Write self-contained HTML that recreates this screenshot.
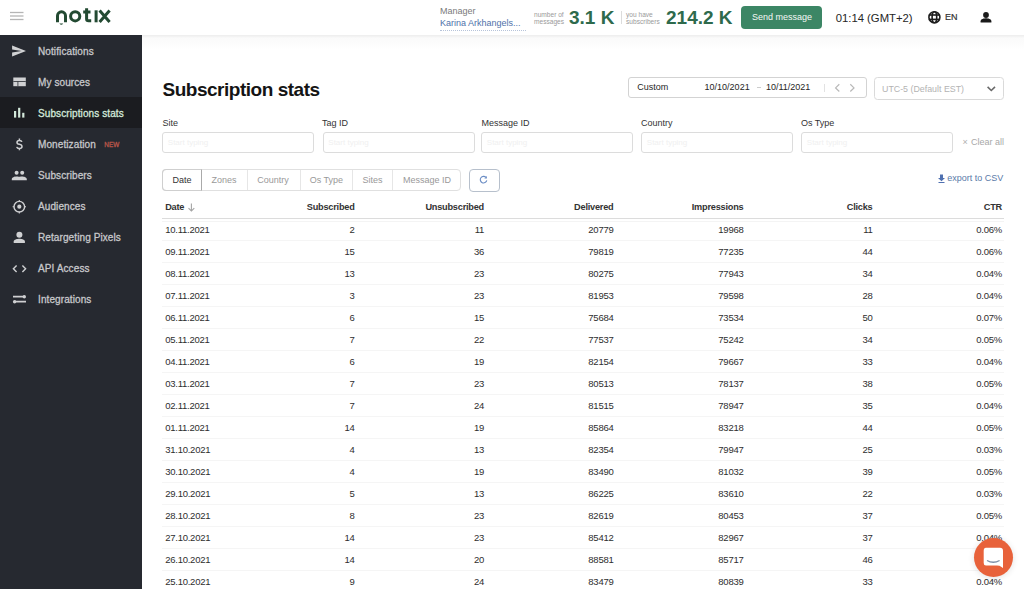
<!DOCTYPE html>
<html><head><meta charset="utf-8">
<style>
*{box-sizing:border-box;margin:0;padding:0}
html,body{width:1024px;height:589px;overflow:hidden;background:#fff;font-family:"Liberation Sans",sans-serif;color:#222}
.a{position:absolute;line-height:1;white-space:nowrap}
#hdr{position:absolute;left:0;top:0;width:1024px;height:35px;background:#fff}
#shd{position:absolute;left:142px;top:35px;width:882px;height:14px;background:linear-gradient(#ededed 0px,#f3f3f3 1.5px,#fafafa 3px,#fcfcfc 8px,#fff 14px)}
#side{position:absolute;left:0;top:35px;width:142px;height:554px;background:#262930}
.nav{position:absolute;left:0;width:142px;height:31px;color:#c6c7ca}
.nav .t{position:absolute;left:38px;top:12.2px;font-size:10px;line-height:1;white-space:nowrap;letter-spacing:0.1px;-webkit-text-stroke:0.3px currentColor}
.nav svg{position:absolute;left:0;top:0}
.nav.act{background:#1b1c20;color:#d3e8da}
.new{position:absolute;left:66.2px;top:1.6px;color:#b9564a;font-size:6.4px;letter-spacing:0.1px;-webkit-text-stroke:0.3px currentColor}
.lbl{position:absolute;top:119px;font-size:9px;line-height:1;color:#333}
.inp{position:absolute;top:132px;height:21px;width:152px;border:1px solid #dcdcdc;border-radius:3px}
.inp span{position:absolute;left:4.8px;top:6px;font-size:8px;line-height:1;color:#f0f0f0}
.tab{position:absolute;top:175.8px;font-size:9px;line-height:1;color:#999}
.vd{position:absolute;top:170px;width:1px;height:20px;background:#e6e6e6}
.th{position:absolute;top:202.7px;left:0;width:1024px;height:10px;font-size:9.2px;letter-spacing:-0.22px;font-weight:bold;color:#333}
.th i,.tr i{position:absolute;top:0;font-style:normal;line-height:1;white-space:nowrap}
.tr{position:absolute;left:0;width:1024px;height:22px;font-size:9.5px;letter-spacing:-0.25px;color:#2e2e2e}
.tr i{top:6.1px}
.sep{position:absolute;left:162px;width:842px;height:1px;background:#f5f5f5}
.c0{left:165.2px}
.c1{right:669.4px}.c2{right:540px}.c3{right:410.5px}.c4{right:280.5px}.c5{right:151.5px}.c6{right:22px}
</style></head><body>
<div id="hdr">
  <svg class="a" style="left:0;top:0" width="140" height="35" viewBox="0 0 140 35">
    <g stroke="#b5b5b5" stroke-width="1.3"><line x1="10" y1="12.5" x2="23.5" y2="12.5"/><line x1="10" y1="16" x2="23.5" y2="16"/><line x1="10" y1="19.5" x2="23.5" y2="19.5"/></g>
    <g stroke="#234a32" stroke-width="3" fill="none" stroke-linecap="butt">
      <path d="M57.5 22.3 V15.8 A4 4 0 0 1 65.5 15.8 V22.3"/>
      <circle cx="75.2" cy="16.3" r="4.6"/>
      <path d="M86.6 8.3 V19 Q86.6 20.8 88.6 20.8 H91.2"/>
      <line x1="83.2" y1="12" x2="90.5" y2="12"/>
      <line x1="96.1" y1="10.3" x2="96.1" y2="22.3"/>
      <path d="M99.6 10.6 L109.6 22 M109.6 10.6 L99.6 22"/>
    </g>
    <path d="M59.4 23.4 Q61.3 26.2 63.2 23.4 Z" fill="#234a32"/>
  </svg>
  <div class="a" style="left:440px;top:6.6px;font-size:9px;color:#7a7a7a">Manager</div>
  <div class="a" style="left:440px;top:19.1px;font-size:9px;color:#4f72aa">Karina Arkhangels...</div>
  <div class="a" style="left:440px;top:29.5px;width:86px;height:0;border-top:1px dotted #b7c4da"></div>
  <div class="a" style="left:534px;top:10.8px;font-size:6.6px;line-height:7.6px;color:#9a9a9a">number of<br>messages</div>
  <div class="a" style="left:569px;top:8.3px;font-size:19px;font-weight:bold;color:#2e6a4c">3.1 K</div>
  <div class="a" style="left:621px;top:11px;width:1px;height:13px;background:#dcdcdc"></div>
  <div class="a" style="left:626px;top:10.8px;font-size:6.6px;line-height:7.6px;color:#9a9a9a">you have<br>subscribers</div>
  <div class="a" style="left:666px;top:8.3px;font-size:19px;font-weight:bold;color:#2e6a4c">214.2 K</div>
  <div class="a" style="left:741px;top:6px;width:81px;height:22.5px;background:#3c8665;border-radius:4px"></div>
  <div class="a" style="left:752px;top:12.8px;font-size:9px;color:#f4f8f5">Send message</div>
  <div class="a" style="left:835.7px;top:12.7px;font-size:11.3px;color:#262626">01:14 (GMT+2)</div>
  <svg class="a" style="left:927px;top:10px" width="15" height="15" viewBox="0 0 15 15">
    <g fill="none" stroke="#1d1d1d" stroke-width="1.6"><circle cx="7.4" cy="7.2" r="5.5"/><ellipse cx="7.4" cy="7.2" rx="2.3" ry="5.5"/><line x1="1.8" y1="5" x2="13" y2="5"/><line x1="1.8" y1="9.4" x2="13" y2="9.4"/></g>
  </svg>
  <div class="a" style="left:945px;top:12.9px;font-size:9px;-webkit-text-stroke:0.2px #333;color:#333">EN</div>
  <svg class="a" style="left:978px;top:10px" width="16" height="15" viewBox="0 0 16 15">
    <circle cx="8" cy="5" r="2.9" fill="#1a1a1a"/><path d="M2.6 12.4 V11.2 C2.6 9 6 8.2 8 8.2 C10 8.2 13.4 9 13.4 11.2 V12.4 Z" fill="#1a1a1a"/>
  </svg>
</div>
<div id="shd"></div>
<div id="side">
  <div class="nav" style="top:0">
    <svg width="40" height="31"><path d="M12.1 21.6 L26 16 L12.1 10.4 L12.1 14.6 L21.5 16 L12.1 17.4 Z" fill="#d0d1d3"/></svg>
    <span class="t">Notifications</span></div>
  <div class="nav" style="top:31px">
    <svg width="40" height="31"><rect x="13.3" y="11.5" width="12.5" height="8.7" fill="#d0d1d3"/><path d="M13.3 15.5 H25.8 M17.9 15.5 V20.2" stroke="#262930" stroke-width="0.8"/></svg>
    <span class="t">My sources</span></div>
  <div class="nav act" style="top:62px">
    <svg width="40" height="31"><rect x="14" y="14" width="2.2" height="6.6" fill="#d3e8da"/><rect x="18.1" y="10.8" width="2.2" height="9.8" fill="#d3e8da"/><rect x="22.2" y="15.8" width="2.2" height="4.8" fill="#d3e8da"/></svg>
    <span class="t">Subscriptions stats</span></div>
  <div class="nav" style="top:93px">
    <svg width="40" height="31"><path d="M21.9 13.9 Q21.5 12.4 19.4 12.4 Q17 12.4 17 14.4 Q17 15.9 19.4 16.3 Q22 16.7 22 18.6 Q22 20.6 19.4 20.6 Q17.2 20.6 16.7 18.9 M19.4 10.6 V12.4 M19.4 20.6 V22.2" fill="none" stroke="#cfd0d2" stroke-width="1.5"/></svg>
    <span class="t">Monetization<span class="new">NEW</span></span></div>
  <div class="nav" style="top:124px">
    <svg width="40" height="31"><circle cx="16.6" cy="13.7" r="2" fill="#cfd0d2"/><circle cx="22.2" cy="13.7" r="2" fill="#cfd0d2"/><path d="M11.8 21.3 V20 C11.8 18.2 14.6 17.4 16.5 17.4 C18.4 17.4 19.3 17.7 19.3 17.7 C19.3 17.7 20.2 17.4 22.1 17.4 C24 17.4 26.8 18.2 26.8 20 V21.3 Z" fill="#cfd0d2"/></svg>
    <span class="t">Subscribers</span></div>
  <div class="nav" style="top:155px">
    <svg width="40" height="31"><circle cx="19.3" cy="16.7" r="5.3" fill="none" stroke="#cfd0d2" stroke-width="1.4"/><circle cx="19.3" cy="16.7" r="2.1" fill="#cfd0d2"/><path d="M19.3 10 V11.6 M19.3 21.8 V23.4 M12.6 16.7 H14.2 M24.4 16.7 H26" stroke="#cfd0d2" stroke-width="1.1"/></svg>
    <span class="t">Audiences</span></div>
  <div class="nav" style="top:186px">
    <svg width="40" height="31"><circle cx="19.4" cy="13.8" r="3" fill="#cfd0d2"/><path d="M13.7 22.1 V20.6 C13.7 18.6 17.3 17.8 19.4 17.8 C21.5 17.8 24.9 18.6 24.9 20.6 V22.1 Z" fill="#cfd0d2"/></svg>
    <span class="t">Retargeting Pixels</span></div>
  <div class="nav" style="top:217px">
    <svg width="40" height="31"><path d="M16.6 13.6 L13.4 16.8 L16.6 20 M22.4 13.6 L25.6 16.8 L22.4 20" fill="none" stroke="#cfd0d2" stroke-width="1.4"/></svg>
    <span class="t">API Access</span></div>
  <div class="nav" style="top:248px">
    <svg width="40" height="31"><path d="M13 13.7 H24.5 M14.5 18.7 H26" stroke="#cfd0d2" stroke-width="1.7"/><circle cx="24.3" cy="13.7" r="1.7" fill="#cfd0d2"/><circle cx="14.6" cy="18.7" r="1.7" fill="#cfd0d2"/></svg>
    <span class="t">Integrations</span></div>
</div>
<div class="a" style="left:162.5px;top:79.9px;font-size:19px;letter-spacing:-0.48px;font-weight:bold;color:#141414">Subscription stats</div>
<div class="a" style="left:628px;top:77px;width:238.5px;height:21px;border:1px solid #d3d3d3;border-radius:3px"></div>
<div class="a" style="left:637.3px;top:82.6px;font-size:9px;color:#262626">Custom</div>
<div class="a" style="left:704.6px;top:82.6px;font-size:9px;color:#262626">10/10/2021</div>
<div class="a" style="left:757px;top:87px;width:4px;height:1px;background:#ccc"></div>
<div class="a" style="left:766px;top:82.6px;font-size:9px;color:#262626">10/11/2021</div>
<div class="a" style="left:824px;top:84px;width:1px;height:7.5px;background:#e2e2e2"></div>
<svg class="a" style="left:830px;top:80px" width="30" height="15"><path d="M839.3 4.3 L835.6 7.9 L839.3 11.5" transform="translate(-830 0)" fill="none" stroke="#b8b8b8" stroke-width="1.2"/><path d="M850.3 4.3 L854 7.9 L850.3 11.5" transform="translate(-830 0)" fill="none" stroke="#b8b8b8" stroke-width="1.2"/></svg>
<div class="a" style="left:874px;top:77px;width:129.5px;height:22.5px;border:1px solid #dadada;border-radius:3.5px"></div>
<div class="a" style="left:882px;top:84.8px;font-size:8.85px;color:#b3b3b3">UTC-5 (Default EST)</div>
<svg class="a" style="left:984px;top:83px" width="14" height="12"><path d="M3.6 3.9 L7.3 7.5 L11 3.9" fill="none" stroke="#6a6a6a" stroke-width="1.6"/></svg>
<div class="lbl" style="left:162.4px">Site</div>
<div class="lbl" style="left:322px">Tag ID</div>
<div class="lbl" style="left:481.5px">Message ID</div>
<div class="lbl" style="left:641px">Country</div>
<div class="lbl" style="left:801px">Os Type</div>
<div class="inp" style="left:162px"><span>Start typing</span></div>
<div class="inp" style="left:322.5px"><span>Start typing</span></div>
<div class="inp" style="left:481px"><span>Start typing</span></div>
<div class="inp" style="left:641px"><span>Start typing</span></div>
<div class="inp" style="left:801px"><span>Start typing</span></div>
<div class="a" style="left:962.5px;top:138px;font-size:9px;color:#b0b0b0">&#215;</div>
<div class="a" style="left:971px;top:137.7px;font-size:9px;color:#a8a8a8">Clear all</div>
<div class="a" style="left:162px;top:169px;width:299px;height:22px;border:1px solid #e0e0e0;border-radius:4px"></div>
<div class="a" style="left:162px;top:169px;width:40px;height:22px;border:1px solid #cfcfcf;border-right-color:#aaa;border-radius:4px 0 0 4px"></div>
<div class="vd" style="left:247px"></div>
<div class="vd" style="left:299.5px"></div>
<div class="vd" style="left:352px"></div>
<div class="vd" style="left:392px"></div>
<div class="tab" style="left:172.6px;color:#333">Date</div>
<div class="tab" style="left:211.6px">Zones</div>
<div class="tab" style="left:257.3px">Country</div>
<div class="tab" style="left:309.7px">Os Type</div>
<div class="tab" style="left:362.5px">Sites</div>
<div class="tab" style="left:403px">Message ID</div>
<div class="a" style="left:468.5px;top:168.5px;width:31px;height:23px;border:1px solid #b7c0cc;border-radius:4px"></div>
<svg class="a" style="left:476px;top:172px" width="16" height="16"><path d="M10 5.4 A3.3 3.3 0 1 0 10.8 8.4" fill="none" stroke="#6a8cc4" stroke-width="1.1"/><path d="M10.9 3.9 V6.5 H8.3 Z" fill="#6a8cc4"/></svg>
<svg class="a" style="left:937px;top:173px" width="10" height="11"><path d="M3 1.5 H6 V5 H8 L4.5 8.3 L1 5 H3 Z" fill="#4f70b0"/><rect x="1.5" y="9" width="6" height="1" fill="#4f70b0"/></svg>
<div class="a" style="left:947.2px;top:174px;font-size:9px;color:#5a7aa8">export to CSV</div>
<div class="th"><i class="c0">Date</i><i class="c1">Subscribed</i><i class="c2">Unsubscribed</i><i class="c3">Delivered</i><i class="c4">Impressions</i><i class="c5">Clicks</i><i class="c6">CTR</i></div>
<svg class="a" style="left:186px;top:201px" width="10" height="12"><path d="M5.4 2.6 V10 M2.5 7.1 L5.4 10 L8.3 7.1" fill="none" stroke="#a5a5a5" stroke-width="1.1"/></svg>
<div class="a" style="left:162px;top:218px;width:842px;height:1px;background:#dcdcdc"></div>
<div class="a" style="left:162px;top:221px;width:842px;height:1px;background:#f4f4f4"></div>
<div class="sep" style="top:240px"></div>
<div class="sep" style="top:262px"></div>
<div class="sep" style="top:284px"></div>
<div class="sep" style="top:306px"></div>
<div class="sep" style="top:328px"></div>
<div class="sep" style="top:350px"></div>
<div class="sep" style="top:372px"></div>
<div class="sep" style="top:394px"></div>
<div class="sep" style="top:416px"></div>
<div class="sep" style="top:438px"></div>
<div class="sep" style="top:460px"></div>
<div class="sep" style="top:482px"></div>
<div class="sep" style="top:504px"></div>
<div class="sep" style="top:526px"></div>
<div class="sep" style="top:548px"></div>
<div class="sep" style="top:570px"></div>
<div class="tr" style="top:219px"><i class="c0">10.11.2021</i><i class="c1">2</i><i class="c2">11</i><i class="c3">20779</i><i class="c4">19968</i><i class="c5">11</i><i class="c6">0.06%</i></div>
<div class="tr" style="top:241px"><i class="c0">09.11.2021</i><i class="c1">15</i><i class="c2">36</i><i class="c3">79819</i><i class="c4">77235</i><i class="c5">44</i><i class="c6">0.06%</i></div>
<div class="tr" style="top:263px"><i class="c0">08.11.2021</i><i class="c1">13</i><i class="c2">23</i><i class="c3">80275</i><i class="c4">77943</i><i class="c5">34</i><i class="c6">0.04%</i></div>
<div class="tr" style="top:285px"><i class="c0">07.11.2021</i><i class="c1">3</i><i class="c2">23</i><i class="c3">81953</i><i class="c4">79598</i><i class="c5">28</i><i class="c6">0.04%</i></div>
<div class="tr" style="top:307px"><i class="c0">06.11.2021</i><i class="c1">6</i><i class="c2">15</i><i class="c3">75684</i><i class="c4">73534</i><i class="c5">50</i><i class="c6">0.07%</i></div>
<div class="tr" style="top:329px"><i class="c0">05.11.2021</i><i class="c1">7</i><i class="c2">22</i><i class="c3">77537</i><i class="c4">75242</i><i class="c5">34</i><i class="c6">0.05%</i></div>
<div class="tr" style="top:351px"><i class="c0">04.11.2021</i><i class="c1">6</i><i class="c2">19</i><i class="c3">82154</i><i class="c4">79667</i><i class="c5">33</i><i class="c6">0.04%</i></div>
<div class="tr" style="top:373px"><i class="c0">03.11.2021</i><i class="c1">7</i><i class="c2">23</i><i class="c3">80513</i><i class="c4">78137</i><i class="c5">38</i><i class="c6">0.05%</i></div>
<div class="tr" style="top:395px"><i class="c0">02.11.2021</i><i class="c1">7</i><i class="c2">24</i><i class="c3">81515</i><i class="c4">78947</i><i class="c5">35</i><i class="c6">0.04%</i></div>
<div class="tr" style="top:417px"><i class="c0">01.11.2021</i><i class="c1">14</i><i class="c2">19</i><i class="c3">85864</i><i class="c4">83218</i><i class="c5">44</i><i class="c6">0.05%</i></div>
<div class="tr" style="top:439px"><i class="c0">31.10.2021</i><i class="c1">4</i><i class="c2">13</i><i class="c3">82354</i><i class="c4">79947</i><i class="c5">25</i><i class="c6">0.03%</i></div>
<div class="tr" style="top:461px"><i class="c0">30.10.2021</i><i class="c1">4</i><i class="c2">19</i><i class="c3">83490</i><i class="c4">81032</i><i class="c5">39</i><i class="c6">0.05%</i></div>
<div class="tr" style="top:483px"><i class="c0">29.10.2021</i><i class="c1">5</i><i class="c2">13</i><i class="c3">86225</i><i class="c4">83610</i><i class="c5">22</i><i class="c6">0.03%</i></div>
<div class="tr" style="top:505px"><i class="c0">28.10.2021</i><i class="c1">8</i><i class="c2">23</i><i class="c3">82619</i><i class="c4">80453</i><i class="c5">37</i><i class="c6">0.05%</i></div>
<div class="tr" style="top:527px"><i class="c0">27.10.2021</i><i class="c1">14</i><i class="c2">23</i><i class="c3">85412</i><i class="c4">82967</i><i class="c5">37</i><i class="c6">0.04%</i></div>
<div class="tr" style="top:549px"><i class="c0">26.10.2021</i><i class="c1">14</i><i class="c2">20</i><i class="c3">88581</i><i class="c4">85717</i><i class="c5">46</i><i class="c6">0.05%</i></div>
<div class="tr" style="top:571px"><i class="c0">25.10.2021</i><i class="c1">9</i><i class="c2">24</i><i class="c3">83479</i><i class="c4">80839</i><i class="c5">33</i><i class="c6">0.04%</i></div>
<div class="a" style="left:973.8px;top:537.8px;width:39px;height:39px;border-radius:50%;background:#e8623b;box-shadow:0 1px 6px rgba(0,0,0,0.12)"></div>
<svg class="a" style="left:980px;top:544px" width="26" height="27"><path d="M6 3.7 H20 Q23 3.7 23 6.7 V24 L19.5 21.8 Q18.5 21.5 17 21.5 H6 Q3.7 21.5 3.7 19 V6.7 Q3.7 3.7 6 3.7 Z" fill="#fff"/><path d="M7 16.5 Q13.3 20 19.6 16.5" fill="none" stroke="#7d8fa8" stroke-width="1.3"/></svg>
</body></html>
